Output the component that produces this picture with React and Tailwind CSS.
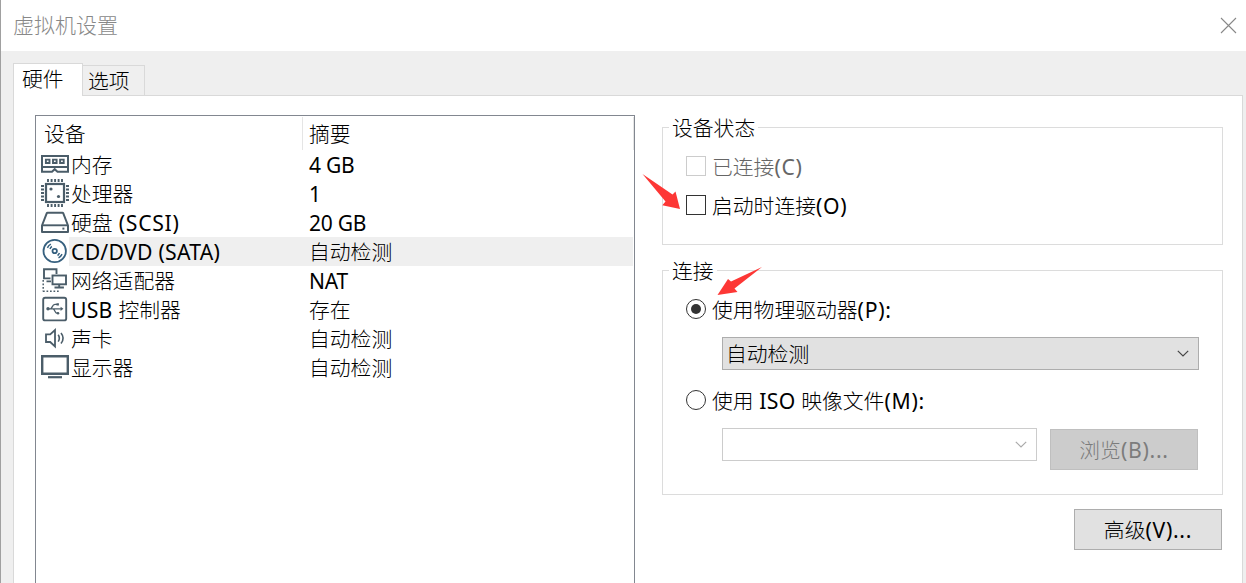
import React from "react";

const INK = "#4b5d69";

function latinStyle(run, tight) {
  if (tight) return "text-[21px] font-normal tracking-[-0.25px]";
  if (run.trim().startsWith("(")) return "text-[21.2px] font-normal tracking-[0.7px]";
  return "text-[21.2px] font-normal tracking-[0.25px]";
}

// Latin runs are set a little larger and heavier than the Chinese text around them.
function Label({ children, tight }) {
  return children.split(/([\x20-\x7e]+)/).map((part, i) =>
    i % 2 ? (
      <span key={i} className={latinStyle(part, tight)}>
        {part}
      </span>
    ) : (
      part
    )
  );
}

function Icon({ children }) {
  return (
    <svg className="block h-[29px] w-[28px] shrink-0" viewBox="0 0 28 29" fill="none" stroke={INK}>
      {children}
    </svg>
  );
}

const Memory = () => (
  <Icon>
    <path d="M1 6H27V21.7H16.5L13.7 19.2L11 21.7H1Z" strokeWidth="2" />
    <path d="M1 17H27" strokeWidth="2" />
    <path d="M4.9 9.6h3.6v3.4h-3.6zM12 9.6h3.6v3.4h-3.6zM19.1 9.6h3.6v3.4h-3.6z" strokeWidth="1.9" />
  </Icon>
);

const Cpu = () => (
  <Icon>
    <rect x="5" y="5" width="18" height="18" strokeWidth="2.2" />
    <path
      d="M7 0v3M10.6 0v3M14.1 0v3M17.6 0v3M21 0v3M7 25v3M10.6 25v3M14.1 25v3M17.6 25v3M21 25v3M0 7h3M0 10.5h3M0 14h3M0 17.5h3M0 21h3M25 7h3M25 10.5h3M25 14h3M25 17.5h3M25 21h3"
      strokeWidth="1.9"
    />
    <circle cx="10" cy="10" r="1.6" fill={INK} stroke="none" />
    <circle cx="17.5" cy="17.5" r="1.6" fill={INK} stroke="none" />
  </Icon>
);

const Disk = () => (
  <Icon>
    <path d="M1 17.5L5.8 5.2Q6 4.7 6.6 4.7H21.4Q22 4.7 22.2 5.2L27 17.5V24H1Z" strokeWidth="2" strokeLinejoin="round" />
    <path d="M1 17.3H27" strokeWidth="1.9" />
    <rect x="21.4" y="19.6" width="2" height="2" fill={INK} stroke="none" />
  </Icon>
);

const Disc = () => (
  <svg className="block h-[29px] w-[28px] shrink-0" viewBox="0 0 28 29" fill="none" stroke="#36607f">
    <circle cx="13.7" cy="14" r="11.2" strokeWidth="1.8" />
    <circle cx="13.7" cy="14" r="2.2" strokeWidth="1.8" />
    <path d="M6.4 10.9Q7.5 8.4 9.9 7.2M9 11.9Q9.6 10.3 10.9 9.5M21 17.1Q19.9 19.6 17.5 20.8M18.4 16.1Q17.8 17.7 16.5 18.5" strokeWidth="1.5" />
  </svg>
);

const Network = () => (
  <Icon>
    <path d="M9.5 12.4H3V3.2H15.5V8" strokeWidth="1.9" />
    <rect x="11.5" y="9.5" width="13.5" height="8.8" strokeWidth="1.9" />
    <path d="M18.2 18.3v3.2M13.5 21.5h9.4M5.5 15.4h4.5" strokeWidth="1.9" />
    <path d="M2.2 14v11.5M2 25.3h16" strokeWidth="1.5" strokeDasharray="1.7 1.8" />
  </Icon>
);

const Usb = () => (
  <Icon>
    <rect x="2.2" y="2.7" width="23" height="22.7" rx="2" strokeWidth="1.9" />
    <path d="M6 13.8h15M9.5 13.8C11.5 13.5 11 9.5 14 9.4h2M12 13.8c2 .3 1.7 4.2 4 4.4h1" strokeWidth="1.3" />
    <circle cx="7" cy="13.8" r="1.7" fill={INK} stroke="none" />
    <path d="M19.6 11.7l2.8 2.1-2.8 2.1zM15.5 8.2h2.4v2.4h-2.4z" fill={INK} stroke="none" />
    <circle cx="17" cy="18.2" r="1.3" fill={INK} stroke="none" />
  </Icon>
);

const Sound = () => (
  <Icon>
    <path d="M5 10.4h4.2L14 6v16.4L9.2 18H5z" strokeWidth="1.8" />
    <path d="M17.2 10.8q2.3 3.4 0 6.8M20 9q4.2 5.2 0 10.4" strokeWidth="1.6" />
  </Icon>
);

const Monitor = () => (
  <Icon>
    <path d="M1.2 3.2H26.8V20.8H1.2Z" strokeWidth="2.4" />
    <path d="M7 24.2h14" strokeWidth="2.2" />
  </Icon>
);

const devices = [
  { icon: Memory, name: "内存", info: "4 GB" },
  { icon: Cpu, name: "处理器", info: "1" },
  { icon: Disk, name: "硬盘 (SCSI)", info: "20 GB" },
  { icon: Disc, name: "CD/DVD (SATA)", info: "自动检测", selected: true },
  { icon: Network, name: "网络适配器", info: "NAT" },
  { icon: Usb, name: "USB 控制器", info: "存在" },
  { icon: Sound, name: "声卡", info: "自动检测" },
  { icon: Monitor, name: "显示器", info: "自动检测" },
];

function DeviceList() {
  return (
    <div className="h-[500px] w-[600px] shrink-0 border border-[#828790] bg-white">
      <div className="flex h-[34px] pt-px leading-[34px]">
        <div className="h-[33px] w-[267px] border-r border-[#e5e5e5] pl-2">设备</div>
        <div className="h-[33px] flex-1 border-r border-[#e5e5e5] pl-[6px]">摘要</div>
      </div>
      {devices.map(({ icon: Glyph, name, info, selected }) => (
        <div key={name} className="flex h-[29px] pl-[5px] leading-[30px]">
          <Glyph />
          <div className={selected ? "mr-px flex flex-1 bg-[#efefef]" : "mr-px flex flex-1"}>
            <span className="w-[240px] pl-[2px]">
              <Label>{name}</Label>
            </span>
            <span>
              <Label tight>{info}</Label>
            </span>
          </div>
        </div>
      ))}
    </div>
  );
}

function Group({ title, className, children }) {
  return (
    <section className={`w-[561px] border border-[#dcdcdc] ${className}`}>
      <h2 className="-mt-[15px] ml-[6px] h-[30px] w-fit bg-white px-[3px] leading-[31px]">{title}</h2>
      {children}
    </section>
  );
}

function Chevron({ color }) {
  return (
    <svg className="h-[7px] w-[12px]" viewBox="0 0 12 7" fill="none" stroke={color} strokeWidth="1.2">
      <path d="M.8 .8L6 6L11.2 .8" />
    </svg>
  );
}

function Radio({ checked, children }) {
  return (
    <div className="flex h-[30px] items-center gap-[6px] pl-[23px]">
      <span className="flex size-5 items-center justify-center rounded-full border border-[#333]">
        {checked && <span className="size-[10px] rounded-full bg-[#333]" />}
      </span>
      <span className="relative top-px leading-[30px]">
        <Label>{children}</Label>
      </span>
    </div>
  );
}

export default function App() {
  return (
    <div className="relative flex h-[583px] w-[1246px] flex-col overflow-hidden border-l border-[#a0a0a0] bg-[#efefef] font-['Noto_Sans','Noto_Sans_CJK_SC',sans-serif] text-[20.8px] font-light whitespace-nowrap text-black">
      <header className="flex h-[51px] shrink-0 items-center justify-between bg-white pr-[9px] pl-3 text-[21px] text-[#888]">
        <h1 className="font-light">虚拟机设置</h1>
        <svg className="size-[17px]" viewBox="0 0 17 17" stroke="#888" strokeWidth="1.1">
          <path d="M1 1L16 16M16 1L1 16" />
        </svg>
      </header>
      <nav className="z-10 mt-3 -mb-px flex h-[33px] shrink-0 items-end pl-3">
        <div className="h-[33px] w-[70px] border border-b-0 border-[#d9d9d9] bg-white pl-2 leading-[31px]">硬件</div>
        <div className="h-[31px] w-[62px] border border-l-0 border-[#d9d9d9] pl-[5px] leading-[31px]">选项</div>
      </nav>
      <main className="ml-3 flex h-[500px] w-[1230px] shrink-0 border border-[#d9d9d9] bg-white pt-[19px] pl-[21px]">
        <DeviceList />
        <div className="ml-[27px] flex w-[561px] shrink-0 flex-col pt-3">
          <Group title="设备状态" className="h-[118px]">
            <label className="mt-[8px] flex h-[30px] items-center gap-[6px] pl-[23px] text-[#666]">
              <span className="size-5 border border-[#ccc]" />
              <span className="relative top-px">
                <Label>已连接(C)</Label>
              </span>
            </label>
            <label className="mt-[9px] flex h-[30px] items-center gap-[6px] pl-[23px]">
              <span className="size-5 border border-[#333]" />
              <span className="relative top-px">
                <Label>启动时连接(O)</Label>
              </span>
            </label>
          </Group>
          <Group title="连接" className="mt-[25px] h-[225px]">
            <div className="mt-2">
              <Radio checked>使用物理驱动器(P):</Radio>
            </div>
            <div className="mt-[13px] ml-[59px] flex h-[33px] w-[477px] items-center justify-between border border-[#adadad] bg-[#e1e1e1] pr-[9px] pl-[3px]">
              <span className="leading-[32px]">自动检测</span>
              <Chevron color="#444" />
            </div>
            <div className="mt-[15px]">
              <Radio>使用 ISO 映像文件(M):</Radio>
            </div>
            <div className="mt-[13px] ml-[59px] flex items-start">
              <div className="flex h-[33px] w-[315px] items-center justify-end border border-[#ccc] bg-white pr-[9px]">
                <Chevron color="#aaa" />
              </div>
              <button className="mt-px ml-[13px] h-[41px] w-[148px] border border-[#bfbfbf] bg-[#ccc] pt-[2px] text-[#7c7c7c]">
                <Label>浏览(B)...</Label>
              </button>
            </div>
          </Group>
          <button className="mt-[14px] mr-px h-[41px] w-[148px] self-end border border-[#adadad] bg-[#e1e1e1] pt-[2px]">
            <Label>高级(V)...</Label>
          </button>
        </div>
      </main>
      <svg className="pointer-events-none absolute top-0 left-0 z-20 h-[583px] w-[1245px]" viewBox="1 0 1245 583" fill="#fd3735">
        <path d="M642.5 174L672.5 194.5L675.5 191.5L680 209L662.3 205.3L665.5 201.5Z" />
        <path d="M762 267L734.5 288.5L737.5 292L717.5 295L728 279L731 281.5Z" />
      </svg>
    </div>
  );
}
